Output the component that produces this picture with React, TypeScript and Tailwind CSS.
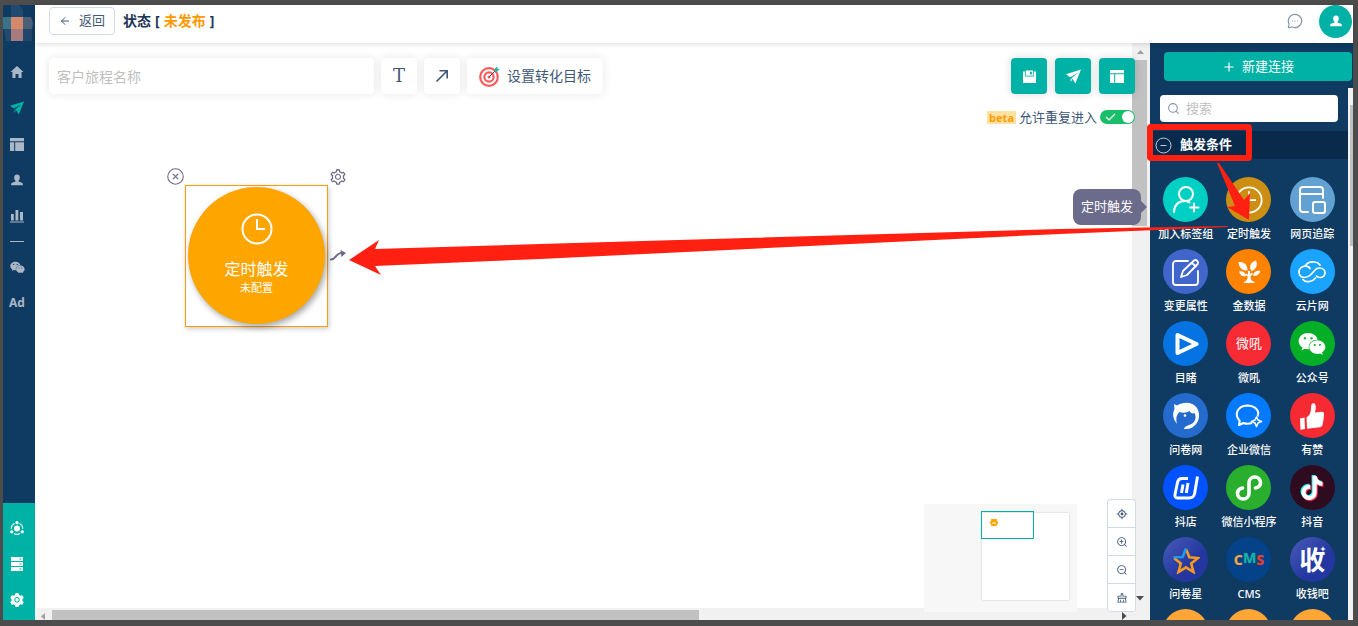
import { ReactNode, useState } from "react";
import {
  AiOutlineAim,
  AiOutlineZoomIn,
  AiOutlineZoomOut,
  AiOutlineClear,
  AiOutlineSetting,
  AiFillSetting,
} from "react-icons/ai";
import { IoMdHome } from "react-icons/io";
import { FaTiktok, FaWeixin } from "react-icons/fa";
import { ArrowLeft, MessageCircleMore, Plus, Search } from "lucide-react";

interface IconProps {
  className?: string;
}

interface Trigger {
  label: string;
  bg: string;
  icon: ReactNode;
}

const PlaneIcon = ({ className }: IconProps) => (
  <svg viewBox="0 0 16 16" fill="currentColor" className={className}>
    <path d="M16 .5 0 5.500l4.500 3.200L13 3.800 5.700 9.800l1.300.8L10 15.500z" />
    <path d="M5 10.200v3.600l1.700-2.600z" />
  </svg>
);

const LayoutIcon = ({ className }: IconProps) => (
  <svg viewBox="0 0 14 14" fill="currentColor" className={className}>
    <path d="M0 1h14v3.2H0zM0 5.2h4.2V14H0zM5.2 5.2H14V14H5.2z" />
  </svg>
);

const UserIcon = ({ className }: IconProps) => (
  <svg viewBox="0 0 14 14" fill="currentColor" className={className}>
    <path d="M7 .5c2 0 3.300 1.400 3.300 3.500 0 1.700-.7 3-1.500 3.700v1c1.800.6 4 1.200 4.700 2.200.3.600.4 1.500.4 2.100H.1c0-.6.1-1.500.4-2.100.7-1 2.900-1.600 4.700-2.200v-1C4.400 7 3.700 5.700 3.700 4 3.700 1.900 5 .5 7 .5z" />
  </svg>
);

const ChartIcon = ({ className }: IconProps) => (
  <svg viewBox="0 0 14 14" fill="currentColor" className={className}>
    <path d="M1 5h2.800v6.500H1zM5.500 1h2.800v10.500H5.500zM10 3h3v8.500h-3zM0 12.500h14v1H0z" />
  </svg>
);

const ShareIcon = ({ className }: IconProps) => (
  <svg viewBox="0 0 16 16" fill="currentColor" className={className}>
    <circle cx="8" cy="8.500" r="3.400" />
    <circle cx="8" cy="1.900" r="1.800" />
    <circle cx="2" cy="12.400" r="1.900" />
    <circle cx="14" cy="12.400" r="1.900" />
    <path
      d="M5.300 2.800A6.500 6.500 0 0 0 1.500 9M10.700 2.800A6.500 6.500 0 0 1 14.500 9M4.600 14.300a6.500 6.500 0 0 0 6.800 0"
      fill="none"
      stroke="currentColor"
      strokeWidth="1.200"
    />
  </svg>
);

const ServerIcon = ({ className }: IconProps) => (
  <svg viewBox="0 0 14 16" className={className}>
    <path d="M1 1h12v4H1zM1 6h12v4H1zM1 11h12v4H1z" fill="currentColor" />
    <path d="M9.500 3h2M9.500 8h2M9.500 13h2" stroke="#00b2a6" />
  </svg>
);

const SaveIcon = ({ className }: IconProps) => (
  <svg viewBox="0 0 14 14" className={className}>
    <path d="M0 1.500h2.200V7h9.600V1.500H14V14H0z" fill="currentColor" />
    <path d="M3 .5h8v5.600H3z" fill="currentColor" />
    <path d="M7.500 1.800h2v3h-2z" fill="#00b2a6" />
  </svg>
);

const TargetIcon = ({ className }: IconProps) => (
  <svg viewBox="0 0 21 21" fill="none" className={className}>
    <circle cx="10" cy="11" r="8.800" stroke="#fb5b5b" strokeWidth="2.200" />
    <circle cx="10" cy="11" r="4.600" stroke="#fb5b5b" strokeWidth="2.200" />
    <circle cx="10" cy="11" r="1.500" fill="#fb5b5b" />
    <path d="m10 11 7-7" stroke="#3d4f66" strokeWidth="1" />
    <path d="m15.500 5.500.3-3L18.500.5v2.300l2.200.2-2.300 2.500z" fill="#1fb5a5" />
  </svg>
);

const ClockIcon = ({ className }: IconProps) => (
  <svg viewBox="0 0 32 32" fill="none" stroke="currentColor" strokeWidth="2" className={className}>
    <circle cx="16" cy="16" r="14.500" />
    <path d="M16 6v10h8" />
  </svg>
);

const RingIcon = ({ className }: IconProps) => (
  <svg viewBox="0 0 30 30" fill="none" className={className}>
    <path d="M11 14c1-3 4-5 8-5v5z" fill="#fff" />
  </svg>
);

const navIcons: ReactNode[] = [
  <IoMdHome className="size-4" />,
  <PlaneIcon className="size-[14px] text-[#00b2a6]" />,
  <LayoutIcon className="size-[14px]" />,
  <UserIcon className="size-3" />,
  <ChartIcon className="size-[14px]" />,
];

const triggers: Trigger[] = [
  {
    label: "加入标签组",
    bg: "bg-[#00cfc3]",
    icon: (
      <svg viewBox="0 0 30 30" fill="none" stroke="#fff" strokeWidth="2" strokeLinecap="round" className="size-[30px]">
        <circle cx="15" cy="9" r="7" />
        <path d="M3 27c0-6 4-11 10-11 2 0 4 .4 5.500 1.500M23 18.500v8M19 22.500h8.500" />
      </svg>
    ),
  },
  { label: "定时触发", bg: "bg-[#cc8f14]", icon: <ClockIcon className="size-[28px]" /> },
  {
    label: "网页追踪",
    bg: "bg-[#62a1d2]",
    icon: (
      <svg viewBox="0 0 30 30" fill="none" stroke="#fff" strokeWidth="2" strokeLinecap="round" className="size-[30px]">
        <path d="M11 27H6a3 3 0 0 1-3-3V5a3 3 0 0 1 3-3h17a3 3 0 0 1 3 3v8M3 9h23" />
        <rect x="16" y="17" width="12" height="11" rx="2" />
      </svg>
    ),
  },
  {
    label: "变更属性",
    bg: "bg-[#4066cb]",
    icon: (
      <svg viewBox="0 0 30 30" fill="none" stroke="#fff" strokeWidth="1.800" strokeLinecap="round" strokeLinejoin="round" className="size-[30px]">
        <path d="M17 4H5a3 3 0 0 0-3 3v18a3 3 0 0 0 3 3h19a3 3 0 0 0 3-3V14" />
        <path d="m10 20 2-6L23 3.500c2-1.500 5 1 3.700 3.500L16 18zM21 6l4 3.500" />
      </svg>
    ),
  },
  {
    label: "金数据",
    bg: "bg-[#ff8201]",
    icon: (
      <svg viewBox="0 0 24 24" fill="#fff" className="size-6">
        <path d="M1.500 2c6-.5 9 2.500 9 8.500C5 10.500 2 8 1.500 2zM19 .5c2 4.500.5 8.500-4.500 10.500-3-4.500-1-8.500 4.500-10.500zM2 11.500c3.500-1 6 .5 7 4.500-3.500 1-6-.5-7-4.500zM23.500 11c-1.200 3.800-4 5.300-7.500 4.500.5-3.700 3.500-5.200 7.500-4.500z" />
        <path d="M11 11h2.200l-.2 3 2-1.200 1 1-2.500 2.700c0 3 1 4.500 4 5.500v1H7v-1c2.500-1 3.700-2.500 3.700-5.500L8 14.500l1-1 2 1.200z" />
      </svg>
    ),
  },
  {
    label: "云片网",
    bg: "bg-[#1aa4ff]",
    icon: (
      <svg viewBox="0 0 28 22" fill="none" stroke="#fff" strokeWidth="1.700" strokeLinecap="round" className="w-[28px]">
        <path d="M12 7.500C11 5.500 9 5 7 5.200 3.500 5.500 1 8 1 11c0 3.500 2.500 5.500 5.500 5.500 3 0 4.500-1 6.500-3l4-4.500c1-1.200 2.500-2 4.500-2 3 0 5.500 2 5.500 4.700s-2 4.800-5 4.800c-1.500 0-2.500-.5-3.500-1.500" />
        <path d="M7.500 4.500C9.500 1.500 13 .5 16.500 1c2.500.3 4.500 1.500 5.500 3M5 18.500c1.500 2 4 2.500 6.500 2s4.500-1.500 6-3.500" />
      </svg>
    ),
  },
  {
    label: "目睹",
    bg: "bg-[#0574e2]",
    icon: (
      <svg viewBox="0 0 26 26" fill="none" stroke="#fff" strokeWidth="4" strokeLinejoin="round" className="size-[26px]">
        <path d="M4.500 4v18l19-9z" />
      </svg>
    ),
  },
  { label: "微吼", bg: "bg-[#f62b33]", icon: <span className="text-[13px]">微吼</span> },
  { label: "公众号", bg: "bg-[#05ae27]", icon: <FaWeixin className="size-7" /> },
  {
    label: "问卷网",
    bg: "bg-[#246bcd]",
    icon: (
      <svg viewBox="0 0 28 28" className="size-7">
        <path d="M5 22C1 17 0 12 2.500 7L2 2l3 1.500C12-1 21 0 25 6c4 7 2 15-4 19-3 2-6 2-9 2 1-3 3-3 5-4 6-2 8-7 5.500-12-2 1-4 0-5-2-3 2-7 2-10 1-3 3-4 6-2.500 12z" fill="#fff" />
        <circle cx="13" cy="13.500" r="1.300" fill="#fff" />
      </svg>
    ),
  },
  {
    label: "企业微信",
    bg: "bg-[#057aff]",
    icon: (
      <svg viewBox="0 0 28 24" fill="none" stroke="#fff" strokeWidth="2" strokeLinejoin="round" className="w-7">
        <path d="M17 19c-3 1-6 1-8.500 0L4 21l.7-4C-1 11 2 2 12 1.500c8 0 13 5 10.500 11" />
        <path d="m21.500 13 1.500 3 3.500 1.500-3.500 1.500-1.500 3.500-1.500-3.500-3.500-1.500 3.500-1.500z" strokeWidth="1.600" />
      </svg>
    ),
  },
  {
    label: "有赞",
    bg: "bg-[#f62a32]",
    icon: (
      <svg viewBox="0 0 26 28" fill="#fff" className="h-7 w-[26px]">
        <path d="M1 16.500 5.500 15.500 6 27l-4.500.7zM7.500 15.500c3-2 4.500-5 4.500-9C12 3 12.500 1.500 14 1.200c2-.4 2.800 2 2.800 4 0 2-.5 4-.8 5.300l7-.8c1.500 0 2 1 2 2.300 0 2-.6 8-1.500 11-.4 1.500-1.500 2-2.700 2.200L8 26.700z" />
      </svg>
    ),
  },
  {
    label: "抖店",
    bg: "bg-[#0352ff]",
    icon: (
      <svg viewBox="0 0 28 26" fill="none" stroke="#fff" strokeWidth="3" strokeLinejoin="round" className="w-7">
        <path d="M16 3.500h-6c-3 0-4 1.500-4.500 4L3 19.500c-.4 2 .5 3.500 2.500 3.500H17c4 0 5-1.500 5.700-5L25.500 1.500M11 9.500 9.500 18M16 8l-1.700 10" />
      </svg>
    ),
  },
  {
    label: "微信小程序",
    bg: "bg-[#2aae2e]",
    icon: (
      <svg viewBox="0 0 28 28" fill="none" stroke="#fff" strokeWidth="3.600" strokeLinecap="round" className="size-7">
        <path d="M20.500 14c3-.6 5-2.500 5-5.200C25.500 5.500 23 3 19.800 3S14 5.500 14 8.800v10.400C14 22.500 11.500 25 8.200 25S2.500 22.500 2.500 19.200c0-2.700 2-4.600 5-5.200" />
      </svg>
    ),
  },
  {
    label: "抖音",
    bg: "bg-[#2f0b1f]",
    icon: <FaTiktok className="size-6 [filter:drop-shadow(-1px_-1px_0_#25f4ee)_drop-shadow(1px_1px_0_#fe2c55)]" />,
  },
  {
    label: "问卷星",
    bg: "bg-linear-to-br from-[#4a5bb8] to-[#2437a0] to-60%",
    icon: (
      <svg viewBox="0 0 28 28" fill="none" strokeWidth="2.600" className="size-7">
        <path d="m14 3 3.300 8.200 8.700.8-6.800 5.500L21.500 26 14 21.300 6.500 26l2.300-8.500L2 12" stroke="#f79a1e" />
        <path d="m1.500 11.300 9.200-.3L14 2.500" stroke="#1d9bf0" />
      </svg>
    ),
  },
  {
    label: "CMS",
    bg: "bg-[#04438a]",
    icon: (
      <span className="flex items-center text-sm font-extrabold leading-none">
        <span className="text-[#f5a742]">C</span>
        <span className="pb-1 text-[#12b3a2]">M</span>
        <span className="text-[#ea4025]">S</span>
      </span>
    ),
  },
  {
    label: "收钱吧",
    bg: "bg-linear-to-br from-[#4a5bb8] to-[#2437a0] to-60%",
    icon: (
      <span className="relative text-[26px] font-bold leading-none">
        收
        <svg viewBox="0 0 6 6" fill="#fff" className="absolute -right-px -top-px size-[6px]">
          <path d="m3 0 .8 2.200L6 3l-2.200.8L3 6l-.8-2.200L0 3l2.200-.8z" />
        </svg>
      </span>
    ),
  },
  { label: "", bg: "bg-[#ffa637]", icon: <RingIcon className="size-[30px]" /> },
  { label: "", bg: "bg-[#ffa637]", icon: <RingIcon className="size-[30px]" /> },
  { label: "", bg: "bg-[#ffa637]", icon: <RingIcon className="size-[30px]" /> },
];

const Sidebar = () => (
  <nav className="flex w-8 shrink-0 flex-col bg-[#0f3a61] text-[#aab7c6]">
    <svg viewBox="0 0 32 36" className="h-9 w-8">
      <path d="M8 0h8l4 5v7H8z" fill="#214a70" />
      <path d="M0 12h8v12H0z" fill="#38738a" />
      <path d="M8 12h12v12H8z" fill="#d4886c" />
      <path d="M20 12h8l2 6-1 6h-9z" fill="#4b6079" />
      <path d="M1 24h7v12H3z" fill="#22496f" />
      <path d="M8 24h12v12H8z" fill="#a77a7c" />
      <path d="M20 24h9v12h-9z" fill="#21476d" />
    </svg>
    <div className="mt-[13px] flex flex-col">
      {navIcons.map((icon, i) => (
        <a key={i} href="#" className="flex h-9 items-center justify-center pr-1">
          {icon}
        </a>
      ))}
      <div className="flex h-[15px] items-center pl-[7px]">
        <span className="h-px w-[14px] bg-[#aab7c6]" />
      </div>
      <a href="#" className="flex h-9 items-center justify-center pr-1">
        <FaWeixin className="size-[15px]" />
      </a>
      <a href="#" className="flex h-9 items-center justify-center pr-1 text-xs font-bold">
        Ad
      </a>
    </div>
    <div className="mt-auto flex flex-col bg-[#00b2a6] pb-[2px] pt-[7px] text-white">
      <a href="#" className="flex h-9 items-center justify-center pr-1">
        <ShareIcon className="size-[14px]" />
      </a>
      <a href="#" className="flex h-9 items-center justify-center pr-1">
        <ServerIcon className="size-4" />
      </a>
      <a href="#" className="flex h-9 items-center justify-center pr-1">
        <AiFillSetting className="size-4" />
      </a>
    </div>
  </nav>
);

const Header = () => (
  <header className="z-10 flex h-[38px] shrink-0 items-center bg-white pb-[6px] pl-[14px] shadow-[0_1px_5px_rgba(0,0,0,0.15)]">
    <button className="flex h-7 w-[66px] items-center justify-center gap-2 rounded border border-[#d3dae2] text-[13px] text-[#455a75]">
      <ArrowLeft className="size-3" />
      返回
    </button>
    <p className="ml-2 flex gap-1 text-sm font-bold text-[#1d3557]">
      <span>状态</span>
      <span>[</span>
      <span className="text-[#ff9900]">未发布</span>
      <span>]</span>
    </p>
    <button aria-label="消息" className="ml-auto mr-4 text-[#8497b0]">
      <MessageCircleMore className="size-4" strokeWidth={1.8} />
    </button>
    <button aria-label="用户" className="mr-px flex size-[33px] items-center justify-center rounded-full bg-[#00b2a6] text-white">
      <UserIcon className="size-3" />
    </button>
  </header>
);

const toolButton =
  "flex h-9 items-center justify-center rounded bg-white text-[#3f5878] shadow-[0_0_10px_rgba(0,0,0,0.1)]";
const actionButton =
  "flex size-9 items-center justify-center rounded bg-[#00b2a6] text-white shadow-[0_0_10px_rgba(0,0,0,0.15)]";
const zoomButton = "flex h-7 w-full items-center justify-center border-b border-[#d3dae2]";

const Canvas = () => {
  const [nome, setNome] = useState("");
  const [repetir, setRepetir] = useState(true);

  return (
    <main className="relative min-w-0 flex-1 overflow-hidden bg-white">
      {/* scrollbars */}
      <div className="absolute inset-y-0 right-0 w-[18px] bg-[#f1f1f1]">
        <svg viewBox="0 0 18 17" className="h-[17px] w-[18px]">
          <path d="M5 11h7L8.500 7z" fill="#a0a0a0" />
        </svg>
        <div className="h-[166px] w-[15px] bg-[#c1c1c1]" />
        <svg viewBox="0 0 8 5" className="absolute bottom-[19px] left-1 h-[5px] w-2">
          <path d="M0 0h8L4 4.500z" fill="#4d4d4d" />
        </svg>
      </div>
      <div className="absolute bottom-0 left-0 right-[18px] flex h-3 items-center bg-[#f1f1f1]">
        <svg viewBox="0 0 17 12" className="h-3 w-[17px]">
          <path d="M10 5v7L6 8.500z" fill="#a0a0a0" />
        </svg>
        <div className="mt-[2px] h-[10px] w-[59%] bg-[#c1c1c1]" />
        <svg viewBox="0 0 5 8" className="ml-auto mr-[5px] mt-1 h-2 w-[5px]">
          <path d="M0 0v8l4.500-4z" fill="#4d4d4d" />
        </svg>
      </div>

      <div className="relative pl-[14px] pr-[15px] pt-[15px]">
        <div className="flex items-center gap-[7px]">
          <input
            aria-label="客户旅程名称"
            placeholder="客户旅程名称"
            value={nome}
            onChange={(e) => setNome(e.target.value)}
            className="h-9 w-[325px] rounded bg-white px-2 text-sm shadow-[0_0_10px_rgba(0,0,0,0.1)] outline-none placeholder:text-[#bfbfbf]"
          />
          <button className={`${toolButton} w-9 font-['DejaVu_Serif',serif] text-lg leading-none`}>T</button>
          <button aria-label="连线" className={`${toolButton} w-9`}>
            <svg viewBox="0 0 14 14" fill="none" stroke="currentColor" strokeWidth="1.600" className="size-[14px]">
              <path d="M1.500 12.500 12 2M4.500 1.800h7.700v7.700" />
            </svg>
          </button>
          <button className={`${toolButton} w-[136px] gap-[7px] text-sm`}>
            <TargetIcon className="size-[21px]" />
            设置转化目标
          </button>
          <div className="ml-auto flex gap-2">
            <button aria-label="保存" className={actionButton}>
              <SaveIcon className="size-[13px]" />
            </button>
            <button aria-label="发布" className={actionButton}>
              <PlaneIcon className="size-[15px]" />
            </button>
            <button aria-label="布局" className={actionButton}>
              <LayoutIcon className="size-[14px]" />
            </button>
          </div>
        </div>
        <div className="mt-[13px] flex items-center justify-end gap-[3px] text-[13px] leading-5 text-[#3f5878]">
          <span className="bg-[#ffe2a0] px-[2px] text-[11px] font-bold leading-[13px] text-[#ff9c0a]">beta</span>
          <label htmlFor="repeat">允许重复进入</label>
          <span className="relative flex">
            <input
              id="repeat"
              type="checkbox"
              checked={repetir}
              onChange={(e) => setRepetir(e.target.checked)}
              className="h-[14px] w-[35px] appearance-none rounded-full bg-gray-300 checked:bg-[#19be6b]"
            />
            <svg viewBox="0 0 35 14" fill="none" className="pointer-events-none absolute inset-0 h-[14px] w-[35px]">
              <path d="m6 7 3 3 6-6" stroke="#fff" strokeWidth="1.200" />
              <circle cx="28" cy="7" r="6" fill="#fff" />
            </svg>
          </span>
        </div>
      </div>

      {/* node on the free canvas */}
      <div className="absolute left-[150px] top-[142px] flex h-[142px] w-[143px] items-center justify-center border border-[#ff9c0a] bg-white shadow-[1px_2px_5px_rgba(0,0,0,0.2)]">
        <div className="mb-px flex size-[137px] flex-col items-center rounded-full bg-[#ffa500] pt-[26px] text-white shadow-[2px_3px_6px_rgba(0,0,0,0.35)]">
          <ClockIcon className="size-8" />
          <span className="mt-3 text-base leading-6">定时触发</span>
          <span className="text-[11px] leading-[14px]">未配置</span>
        </div>
        <svg viewBox="0 0 16 16" fill="none" stroke="#6b6b8b" className="absolute -left-[19px] -top-[18px] size-[17px]">
          <circle cx="8" cy="8" r="7.300" />
          <path d="m5.500 5.500 5 5M10.500 5.500l-5 5" strokeWidth="1.200" />
        </svg>
        <AiOutlineSetting className="absolute -right-5 -top-[18px] size-[18px] text-[#6b6b8b]" />
        <svg viewBox="0 0 16 12" fill="none" stroke="#6b6b8b" strokeWidth="2" className="absolute -right-[19px] top-[64px] h-3 w-4">
          <path d="M0 9.500c6 1 5-6 11-6.500" />
          <path d="M10.500 0 16 3l-4.500 4z" fill="#6b6b8b" stroke="none" />
        </svg>
      </div>

      {/* minimap and zoom controls */}
      <div className="absolute bottom-2 right-[14px] flex items-end gap-[30px]">
        <div className="relative h-[108px] w-[153px] bg-[#f7f7f7] pl-[58px] pt-[9px]">
          <div className="h-[87px] w-[87px] bg-white shadow-[0_0_2px_rgba(0,0,0,0.2)]" />
          <div className="absolute left-[57px] top-[7px] h-7 w-[53px] border border-[#00b2a6] pl-2 pt-[7px]">
            <svg viewBox="0 0 7 6" className="h-[7px] w-2" fill="#ffa500">
              <path d="M1 0h5v2h1v2H6v2H1V4H0V2h1z" />
              <path d="M2 3h3v1H2z" fill="#fff" />
            </svg>
          </div>
        </div>
        <div className="w-[29px] overflow-hidden rounded border border-b-0 border-[#d3dae2] bg-white text-[#3f5878]">
          <button aria-label="定位" className={zoomButton}>
            <AiOutlineAim className="size-3" />
          </button>
          <button aria-label="放大" className={zoomButton}>
            <AiOutlineZoomIn className="size-3" />
          </button>
          <button aria-label="缩小" className={zoomButton}>
            <AiOutlineZoomOut className="size-3" />
          </button>
          <button aria-label="清空" className={zoomButton}>
            <AiOutlineClear className="size-3" />
          </button>
        </div>
      </div>
    </main>
  );
};

const TriggerPanel = () => {
  const [busca, setBusca] = useState("");

  return (
    <aside className="relative flex w-[203px] shrink-0 flex-col bg-[#0f3a61] pt-[9px] text-white">
      <button className="ml-[14px] mr-px flex h-[29px] shrink-0 items-center justify-center gap-[6px] rounded bg-[#00b2a6] text-[13px]">
        <Plus className="size-[14px]" />
        新建连接
      </button>
      <div className="mt-[7px] flex min-h-0 flex-1">
        <div className="min-w-0 flex-1 overflow-hidden pt-[7px]">
          <label className="mx-[10px] flex h-[27px] items-center gap-[6px] rounded bg-white px-[7px] text-[#8497b0]">
            <Search className="size-[13px] shrink-0" />
            <input
              aria-label="搜索"
              placeholder="搜索"
              value={busca}
              onChange={(e) => setBusca(e.target.value)}
              className="w-full min-w-0 bg-transparent text-[13px] text-gray-700 outline-none placeholder:text-[#bfbfbf]"
            />
          </label>
          <button className="mt-[9px] flex h-7 w-full items-center gap-2 bg-[#0a2a4b] pl-[5px] text-[13px] font-bold">
            <svg viewBox="0 0 17 17" fill="none" stroke="#c3cbe0" className="size-[17px]">
              <circle cx="8.500" cy="8.500" r="7.500" />
              <path d="M5.500 8.500h6" />
            </svg>
            触发条件
          </button>
          <ul className="mt-[18px] grid grid-cols-3 gap-y-[7px] px-1">
            {triggers.map((item, i) => (
              <li key={i}>
                <button className="flex w-full flex-col items-center">
                  <span className={`flex size-[45px] items-center justify-center rounded-full ${item.bg}`}>
                    {item.icon}
                  </span>
                  <span className="mt-1 h-4 whitespace-nowrap text-[11px] font-medium leading-4">{item.label}</span>
                </button>
              </li>
            ))}
          </ul>
        </div>
        <div className="flex w-[5px] flex-col items-end bg-[#f1f1f1] pt-[17px]">
          <div className="h-[141px] w-[3px] bg-[#c1c1c1]" />
        </div>
      </div>

      <div className="absolute right-[212px] top-[146px] flex h-9 items-center whitespace-nowrap rounded-lg bg-[#6b6b8b] px-2 text-[13px]">
        定时触发
        <svg viewBox="0 0 6 12" className="absolute left-full h-3 w-[6px]">
          <path d="M0 0v12l6-6z" fill="#6b6b8b" />
        </svg>
      </div>

      <div className="absolute -left-[3px] top-[81px] h-[37px] w-[105px] rounded border-[6px] border-[#ff2012]" />
      <svg viewBox="0 0 34 57" className="absolute left-[67px] top-[120px] h-[57px] w-[34px]">
        <path d="M0 0h2l25 37 6-7-1 27-22-13 8-1z" fill="#ff2012" />
      </svg>
    </aside>
  );
};

const App = () => {
  return (
    <div className="relative flex h-screen bg-[#4c4c4c] pb-[6px] pl-[3px] pr-[5px] pt-[5px] font-['Noto_Sans','Noto_Sans_CJK_SC',sans-serif]">
      <Sidebar />
      <div className="flex min-w-0 flex-1 flex-col">
        <Header />
        <div className="flex min-h-0 flex-1">
          <Canvas />
          <TriggerPanel />
        </div>
      </div>

      <svg
        viewBox="0 0 879 50"
        preserveAspectRatio="none"
        className="pointer-events-none absolute left-[349px] right-[130px] top-[226px] h-[50px] w-[calc(100%-479px)]"
      >
        <path d="M0 34 30 14l-4 9 165-5L711 3l168-3v1L711 8 191 33 26 40l6 9z" fill="#ff2012" />
      </svg>
    </div>
  );
};

export default App;
